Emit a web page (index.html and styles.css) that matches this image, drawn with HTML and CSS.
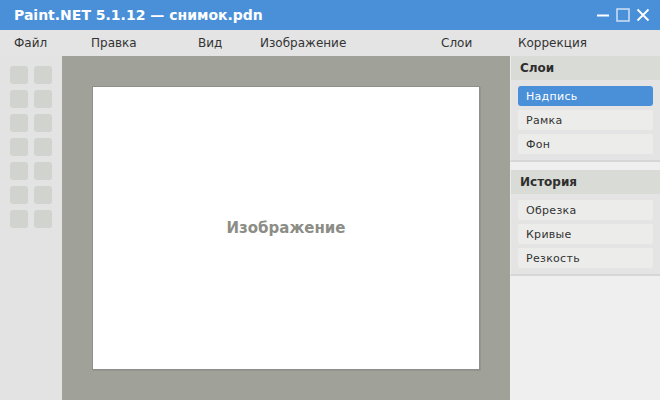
FILE: index.html
```html
<!DOCTYPE html>
<html lang="ru">
<head>
    <meta charset="UTF-8">
    <title>Paint.NET 5.1.12 — снимок.pdn</title>
    <link rel="stylesheet" href="styles.css">
</head>
<body>
    <div class="titlebar">
        <span class="title">Paint.NET 5.1.12 — снимок.pdn</span>
        <div class="win-controls">
            <svg width="14" height="14" viewBox="0 0 14 14"><path d="M1 7.5h12" stroke="#fff" stroke-width="2"/></svg>
            <svg width="14" height="14" viewBox="0 0 14 14"><rect x="1" y="1" width="12" height="12" fill="none" stroke="#cfe1f5" stroke-width="1.5"/></svg>
            <svg width="14" height="14" viewBox="0 0 14 14"><path d="M1.5 1.5l11 11M12.5 1.5l-11 11" stroke="#fff" stroke-width="1.8"/></svg>
        </div>
    </div>

    <div class="menubar">
        <span class="menu-item w77">Файл</span>
        <span class="menu-item w107">Правка</span>
        <span class="menu-item w62">Вид</span>
        <span class="menu-item w181">Изображение</span>
        <span class="menu-item w77">Слои</span>
        <span class="menu-item">Коррекция</span>
    </div>

    <div class="workspace">
        <div class="toolbox">
            <div class="tool"></div><div class="tool"></div>
            <div class="tool"></div><div class="tool"></div>
            <div class="tool"></div><div class="tool"></div>
            <div class="tool"></div><div class="tool"></div>
            <div class="tool"></div><div class="tool"></div>
            <div class="tool"></div><div class="tool"></div>
            <div class="tool"></div><div class="tool"></div>
        </div>

        <div class="canvas-area">
            <div class="document">Изображение</div>
        </div>

        <div class="side-panel">
            <div class="panel">
                <div class="panel-header">Слои</div>
                <div class="panel-body">
                    <div class="row selected">Надпись</div>
                    <div class="row">Рамка</div>
                    <div class="row">Фон</div>
                </div>
            </div>
            <div class="panel">
                <div class="panel-header">История</div>
                <div class="panel-body">
                    <div class="row">Обрезка</div>
                    <div class="row">Кривые</div>
                    <div class="row">Резкость</div>
                </div>
            </div>
        </div>
    </div>
</body>
</html>
```

FILE: styles.css
```css
* {
    box-sizing: border-box;
}
body {
    margin: 0;
    width: 660px;
    height: 400px;
    overflow: hidden;
    font-family: "DejaVu Sans", sans-serif;
    color: #333;
    background: #efefef;
}
.titlebar {
    height: 30px;
    background: #4a90d9;
    display: flex;
    align-items: center;
    justify-content: space-between;
    padding: 0 10px 0 14px;
}
.title {
    color: #fff;
    font-weight: bold;
    font-size: 14px;
}
.win-controls {
    display: flex;
    gap: 6px;
    align-items: center;
}
.win-controls svg {
    display: block;
}
.menubar {
    height: 26px;
    background: #e4e4e4;
    display: flex;
    align-items: center;
    padding-left: 14px;
    font-size: 12px;
}
.menu-item {
    flex: none;
}
.w62 { width: 62px; }
.w77 { width: 77px; }
.w107 { width: 107px; }
.w181 { width: 181px; }

.workspace {
    display: flex;
    height: 344px;
}
.toolbox {
    width: 62px;
    background: #e3e3e3;
    padding: 10px 10px 0 10px;
    display: grid;
    grid-template-columns: 18px 18px;
    grid-auto-rows: 18px;
    column-gap: 6px;
    row-gap: 6px;
    align-content: start;
}
.tool {
    background: #d1d3ce;
    border-radius: 3px;
}
.canvas-area {
    width: 448px;
    background: #a0a29a;
    padding: 30px 0 0 30px;
}
.document {
    width: 388px;
    height: 284px;
    background: #fff;
    border: 1px solid #8d8f88;
    box-shadow: 1px 1px 0 #939590;
    display: flex;
    align-items: center;
    justify-content: center;
    font-weight: bold;
    font-size: 15px;
    color: #8b8d86;
}
.side-panel {
    width: 150px;
    background: #efefef;
}
.panel {
    background: #e4e4e4;
    border-bottom: 2px solid #d6d6d6;
    border-left: 1px solid #ececec;
    margin-bottom: 8px;
}
.panel-header {
    height: 24px;
    background: #d9dbd6;
    font-weight: bold;
    font-size: 12px;
    color: #2e2e2e;
    padding-left: 9px;
    display: flex;
    align-items: center;
}
.panel-body {
    display: flex;
    flex-direction: column;
    gap: 4px;
    padding: 6px 7px 6px 7px;
}
.row {
    height: 20px;
    background: #ecedea;
    border-radius: 2px;
    font-size: 11px;
    padding-left: 8px;
    display: flex;
    align-items: center;
    color: #333;
    letter-spacing: 0.3px;
}
.row.selected {
    background: #4a90d9;
    color: #fff;
    border-radius: 3px;
}
```
